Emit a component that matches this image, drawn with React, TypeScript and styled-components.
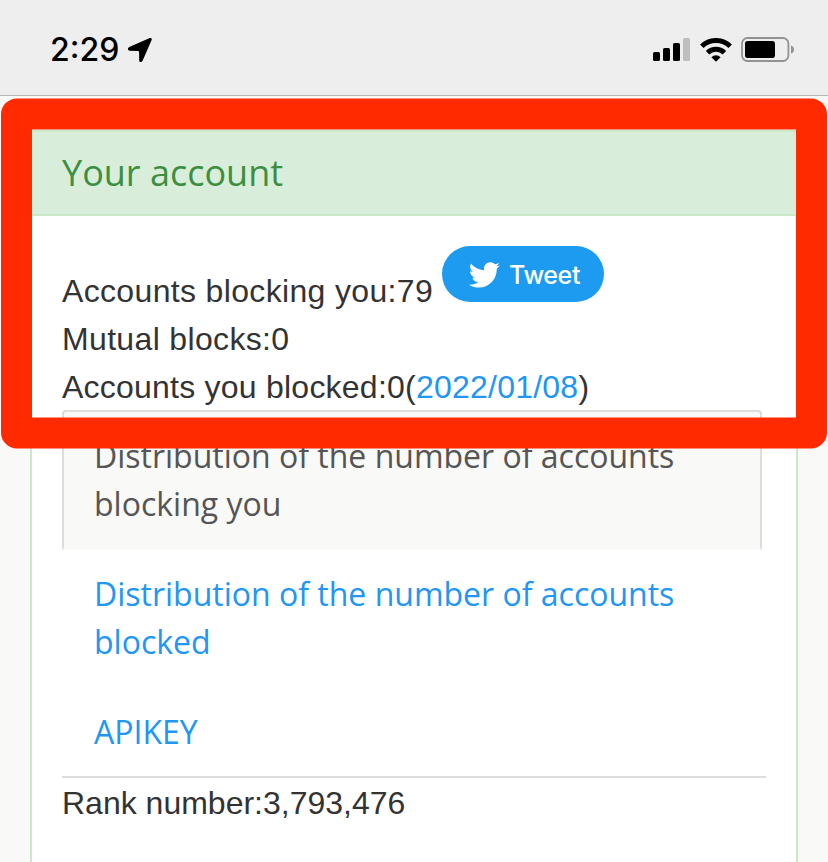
import React from "react";
import styled, { createGlobalStyle } from "styled-components";

const GlobalStyle = createGlobalStyle`
  * { box-sizing: border-box; }
  html, body { margin: 0; padding: 0; background: #f9f9f7; }
`;

const Screen = styled.div`
  position: relative;
  display: flex;
  flex-direction: column;
  width: 828px;
  height: 862px;
  overflow: hidden;
  background: #f9f9f7;
  color: #333;
  font: 32px/48px "Liberation Sans", Arial, sans-serif;
`;

const StatusBar = styled.header`
  display: flex;
  flex: none;
  align-items: center;
  justify-content: space-between;
  height: 96px;
  padding: 4px 33px 0 50px;
  background: #eee;
  border-bottom: 1px solid #b6b6b6;
`;

const StatusGroup = styled.div<{ $gap: number }>`
  display: flex;
  align-items: center;
  gap: ${(p) => p.$gap}px;
  color: #000;
`;

const Clock = styled.time`
  padding-top: 1px;
  font: 500 32px/40px Inter, sans-serif;
`;

const Content = styled.main`
  flex: 1;
  min-height: 0;
  padding: 34px 30px 0;
`;

const Panel = styled.section`
  height: 100%;
  background: #fff;
  border: solid #cae7c8;
  border-width: 2px 2px 0;
`;

const PanelHeading = styled.h2`
  height: 84px;
  margin: 0;
  padding: 17px 30px 0;
  background: #d9eeda;
  border-bottom: 2px solid #cae7c8;
  color: #3c8f41;
  font: 400 36px/48px "Open Sans", sans-serif;
`;

const PanelBody = styled.div`
  padding: 30px 30px 0;
`;

const StatLine = styled.div<{ $spacing?: number }>`
  display: flex;
  align-items: flex-end;
  height: 48px;
  line-height: 46px;
  letter-spacing: ${(p) => p.$spacing ?? 0}px;
  white-space: pre;
`;

const TweetLine = styled(StatLine)`
  height: 68px;
`;

const Link = styled.a`
  color: #2196f3;
  text-decoration: none;
`;

const TweetButton = styled.button`
  display: flex;
  align-items: center;
  gap: 9px;
  align-self: flex-start;
  width: 162px;
  height: 56px;
  margin: 0 0 0 9px;
  padding: 2px 0 0 26px;
  border: 0;
  border-radius: 28px;
  background: #1d9bf0;
  color: #fff;
  font: 500 25px/32px Inter, sans-serif;
  letter-spacing: -0.4px;
`;

const Tabs = styled.ul`
  margin: 0;
  padding: 0;
  list-style: none;
  border-bottom: 2px solid #ddd;
  font-family: "Open Sans", sans-serif;
`;

const Tab = styled.li<{ $active?: boolean }>`
  margin: 0 4px -2px 0;
  padding: 20px 30px;
  border: 2px solid ${(p) => (p.$active ? "#ddd" : "transparent")};
  border-bottom-color: transparent;
  border-radius: 4px 4px 0 0;
  background: ${(p) => (p.$active ? "#f9f9f7" : "transparent")};
  color: ${(p) => (p.$active ? "#555" : "#2196f3")};
`;

const Highlight = styled.div`
  position: absolute;
  left: 1px;
  top: 98px;
  width: 826px;
  height: 350px;
  border: 31px solid #ff2a00;
  border-radius: 16px;
  transform: translateY(0.4px);
`;

const LocationIcon = () => (
  <svg width="26" height="26" viewBox="0 0 26 26">
    <path
      d="M2.3 10 22.8 1.1Q25.4.4 24.6 3L15.7 23.6Q14.5 25.8 12.7 24.8 12.2 24.3 12.2 23.6L12.1 15Q12 13.9 11 13.9L2.4 13.7Q.7 13.3.9 11.5 1.2 10.5 2.3 10Z"
      fill="currentColor"
    />
  </svg>
);

const SignalIcon = () => (
  <svg width="37" height="23" viewBox="0 0 37 23">
    <rect x="0" y="14" width="7" height="9" rx="1.6" />
    <rect x="10" y="10" width="7" height="13" rx="1.6" />
    <rect x="20" y="5" width="7" height="18" rx="1.6" />
    <rect x="30" y="0" width="7" height="23" rx="1.6" fill="#bebebe" />
  </svg>
);

const WifiIcon = () => (
  <svg width="32" height="24" viewBox="0 0 32 24">
    <g fill="none" stroke="currentColor" strokeWidth="5">
      <path d="M1.8 8.2a20.5 20.5 0 0 1 28.4 0" />
      <path d="M7.6 14.8a12 12 0 0 1 16.8 0" />
    </g>
    <path d="M11.4 19.2a6.6 6.6 0 0 1 9.2 0L16 23.8Z" fill="currentColor" />
  </svg>
);

const BatteryIcon = () => (
  <svg width="54" height="25" viewBox="0 0 54 25">
    <rect x="1" y="1" width="46.4" height="23" rx="5.5" fill="none" stroke="#929292" strokeWidth="1.8" />
    <rect x="4" y="4" width="30" height="17" rx="2.8" />
    <path d="M50 8.4q3 1 3 4.1t-3 4.1Z" fill="#929292" />
  </svg>
);

const TwitterIcon = () => (
  <svg width="32" height="32" viewBox="0.3 0.3 23.4 23.4">
    <path
      fill="#fff"
      d="M23.643 4.937c-.835.37-1.732.62-2.675.733.962-.576 1.7-1.49 2.048-2.578-.9.534-1.897.922-2.958 1.13-.85-.904-2.06-1.47-3.4-1.47-2.572 0-4.658 2.086-4.658 4.66 0 .364.042.718.12 1.06-3.873-.195-7.304-2.05-9.602-4.868-.4.69-.63 1.49-.63 2.342 0 1.616.823 3.043 2.072 3.878-.764-.025-1.482-.234-2.11-.583v.06c0 2.257 1.605 4.14 3.737 4.568-.392.106-.803.162-1.227.162-.3 0-.593-.028-.877-.082.593 1.85 2.313 3.198 4.352 3.234-1.595 1.25-3.604 1.995-5.786 1.995-.376 0-.747-.022-1.112-.065 2.062 1.323 4.51 2.093 7.14 2.093 8.57 0 13.255-7.098 13.255-13.254 0-.2-.005-.402-.014-.602.91-.658 1.7-1.477 2.323-2.41z"
    />
  </svg>
);

export default function App() {
  return (
    <>
      <GlobalStyle />
      <Screen>
        <StatusBar>
          <StatusGroup $gap={8}>
            <Clock>2:29</Clock>
            <LocationIcon />
          </StatusGroup>
          <StatusGroup $gap={9.5}>
            <SignalIcon />
            <WifiIcon />
            <BatteryIcon />
          </StatusGroup>
        </StatusBar>
        <Content>
          <Panel>
            <PanelHeading>Your account</PanelHeading>
            <PanelBody>
              <TweetLine $spacing={0.34}>
                <span>Accounts blocking you:79</span>
                <TweetButton>
                  <TwitterIcon />
                  Tweet
                </TweetButton>
              </TweetLine>
              <StatLine $spacing={0.34}>Mutual blocks:0</StatLine>
              <StatLine $spacing={0.23}>
                Accounts you blocked:0(<Link>2022/01/08</Link>)
              </StatLine>
              <Tabs>
                <Tab $active>Distribution of the number of accounts blocking you</Tab>
                <Tab>Distribution of the number of accounts blocked</Tab>
                <Tab>APIKEY</Tab>
              </Tabs>
              <StatLine>Rank number:3,793,476</StatLine>
            </PanelBody>
          </Panel>
        </Content>
        <Highlight />
      </Screen>
    </>
  );
}
